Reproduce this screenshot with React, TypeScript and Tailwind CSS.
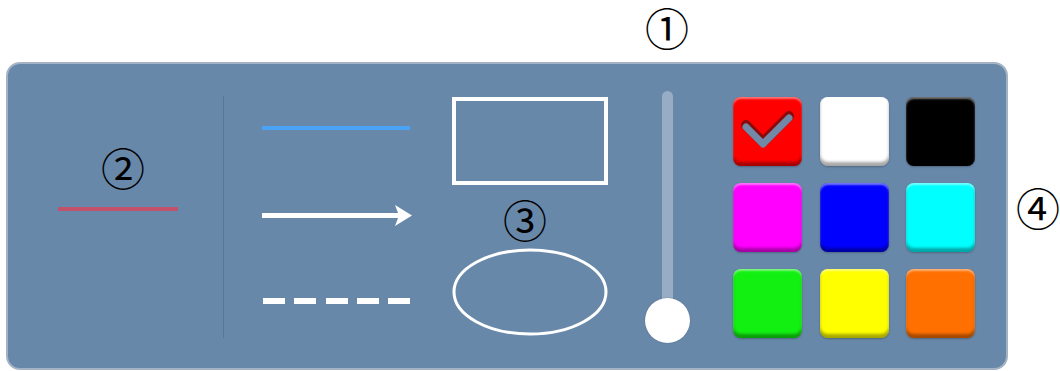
import React from 'react';

const mark = "inline-block font-['Noto_Sans_CJK_SC','Noto_Sans',sans-serif] text-[44px] leading-[48px] text-black";

const swatches = [
  { bg: 'bg-[#ff0000]', checked: true },
  { bg: 'bg-white' },
  { bg: 'bg-black' },
  { bg: 'bg-[#ff00ff]' },
  { bg: 'bg-[#0000ff]' },
  { bg: 'bg-[#00ffff]' },
  { bg: 'bg-[#11f011]' },
  { bg: 'bg-[#ffff00]' },
  { bg: 'bg-[#ff7000]' },
];

const Swatch: React.FC<{ bg: string; checked?: boolean }> = ({ bg, checked }) => (
  <div
    className={`w-[69px] h-[69px] rounded-[8px] ${bg} shadow-[inset_0_2px_2px_rgba(255,255,255,0.45),inset_0_-4px_3px_rgba(0,0,0,0.35),0_1px_2px_rgba(0,0,0,0.25)]`}
  >
    {checked && (
      <svg width="69" height="69" viewBox="0 0 69 69">
        <polyline points="13,28 30,45 56,19" fill="none" stroke="#8a0a0a" strokeWidth="10" strokeLinecap="round" strokeLinejoin="round" />
        <polyline points="13,30 30,47 56,21" fill="none" stroke="#7189a6" strokeWidth="7" strokeLinecap="round" strokeLinejoin="round" />
      </svg>
    )}
  </div>
);

export default function App() {
  return (
    <div className="w-[1060px] h-[371px] bg-white flex flex-col overflow-hidden">
      <div className="h-[62px] pl-[645px] pt-[3px]">
        <span className={mark}>①</span>
      </div>
      <div className="flex">
        <div className="ml-[6px] w-[1002px] h-[308px] rounded-[14px] border-2 border-[#a4b3c3] bg-[#6888aa] flex">
          {/* pen style preview */}
          <div className="w-[215px] flex flex-col">
            <span className={`${mark} ml-[93px] mt-[79px]`}>②</span>
            <div className="ml-[50px] mt-[16px] w-[120px] h-[4px] bg-[#c2526c]" />
          </div>
          <div className="w-px h-[242px] mt-[32px] bg-[#587897]" />

          {/* line tools */}
          <div className="ml-[38px] w-[150px] flex flex-col">
            <svg className="mt-[62px]" width="150" height="4">
              <rect x="0" y="0" width="148" height="4" fill="#4aa3f7" />
            </svg>
            <svg className="mt-[75px]" width="150" height="22">
              <rect x="0" y="8" width="138" height="5" fill="#fff" />
              <polygon points="133,0 150,10.5 133,21 137,10.5" fill="#fff" />
            </svg>
            <svg className="mt-[71px]" width="150" height="6">
              {[0, 31, 63, 94, 125].map((x) => (
                <rect key={x} x={x + 1} y="0" width="22" height="6" fill="#fff" />
              ))}
            </svg>
          </div>

          {/* shape tools */}
          <div className="ml-[40px] w-[156px] flex flex-col items-center">
            <svg className="mt-[33px]" width="156" height="88">
              <rect x="2" y="2" width="152" height="84" fill="none" stroke="#fff" strokeWidth="4" />
            </svg>
            <span className={`${mark} mt-[10px] mr-[10px]`}>③</span>
            <svg className="mt-[5px]" width="156" height="88">
              <ellipse cx="78" cy="44" rx="76" ry="42" fill="none" stroke="#fff" strokeWidth="3" />
            </svg>
          </div>

          {/* width slider */}
          <div className="ml-[37px] w-[45px] flex flex-col items-center">
            <div className="mt-[27px] w-[11px] h-[230px] rounded-full bg-[#98adc5]" />
            <div className="mt-[-23px] w-[45px] h-[45px] rounded-full bg-white shadow-[0_0_2px_rgba(0,0,0,0.2)]" />
          </div>

          {/* colour palette */}
          <div className="ml-[43px] mt-[33px] grid grid-cols-[69px_69px_69px] gap-x-[17.5px] gap-y-[17px] self-start">
            {swatches.map((s, i) => (
              <Swatch key={i} bg={s.bg} checked={s.checked} />
            ))}
          </div>
        </div>
        <div className="ml-[8px] mt-[121px]">
          <span className={mark}>④</span>
        </div>
      </div>
    </div>
  );
}
